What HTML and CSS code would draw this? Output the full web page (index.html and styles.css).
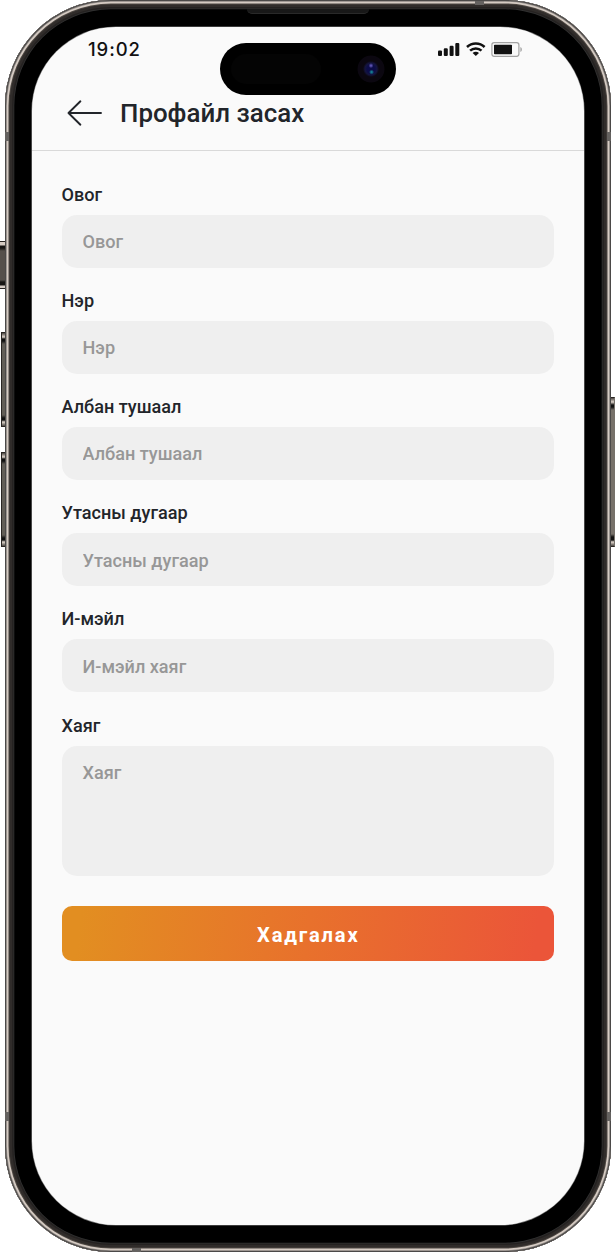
FILE: index.html
```html
<!DOCTYPE html>
<html lang="mn">
<head>
<meta charset="utf-8">
<title>Профайл засах</title>
<link rel="stylesheet" href="styles.css">
</head>
<body>
<div class="device">
  <span class="key key-action"></span>
  <span class="key key-left key-up"></span>
  <span class="key key-left key-down"></span>
  <span class="key key-power"></span>
  <div class="frame">
    <span class="antenna antenna-side antenna-lt"></span>
    <span class="antenna antenna-side antenna-rt"></span>
    <span class="antenna antenna-side antenna-lb"></span>
    <span class="antenna antenna-side antenna-rb"></span>
    <span class="antenna antenna-edge antenna-top"></span>
    <span class="antenna antenna-edge antenna-bottom"></span>
    <span class="speaker"></span>
    <div class="island"><span class="sensor"></span><span class="camera"></span></div>
    <main class="screen">
      <div class="status">
        <span class="time">19:02</span>
        <svg class="indicators" width="86" height="16" viewBox="0 0 86 16">
          <g fill="#111">
            <rect x="0" y="8.5" width="4" height="5.5" rx="1.1"/>
            <rect x="5.8" y="6.3" width="4" height="7.7" rx="1.1"/>
            <rect x="11.6" y="3.8" width="4" height="10.2" rx="1.1"/>
            <rect x="17.3" y="1" width="4" height="13" rx="1.1"/>
            <path d="M37.8 13.9 34.6 11.1a4.6 4.6 0 0 1 6.4 0Z"/>
            <rect x="56" y="2.8" width="18" height="9.4" rx=".8"/>
          </g>
          <g fill="none" stroke="#111" stroke-width="2.5">
            <path d="M29 5a12.6 12.6 0 0 1 17.6 0"/>
            <path d="M32.1 8.7a8.2 8.2 0 0 1 11.4 0"/>
          </g>
          <rect x="53.9" y=".7" width="27" height="13.6" rx="2.2" fill="none" stroke="#a3a3a3" stroke-width="1.2"/>
          <path d="M82.4 5v5c2-.8 2-4.2 0-5Z" fill="#a3a3a3"/>
        </svg>
      </div>
      <header class="header">
        <svg class="back" width="36" height="28" viewBox="0 0 36 28" fill="none" stroke="#22252a" stroke-width="1.9" stroke-linecap="round" stroke-linejoin="round"><path d="M34 14H1.5M13.4 2.3 1.5 14l11.9 11.7"/></svg>
        <h1 class="title">Профайл засах</h1>
      </header>
      <form class="form">
        <label class="field">Овог<input class="input" placeholder="Овог"></label>
        <label class="field">Нэр<input class="input" placeholder="Нэр"></label>
        <label class="field">Албан тушаал<input class="input" placeholder="Албан тушаал"></label>
        <label class="field">Утасны дугаар<input class="input" placeholder="Утасны дугаар"></label>
        <label class="field">И-мэйл<input class="input" placeholder="И-мэйл хаяг"></label>
        <label class="field">Хаяг<textarea class="input area" placeholder="Хаяг"></textarea></label>
        <button class="save" type="button">Хадгалах</button>
      </form>
    </main>
  </div>
</div>
</body>
</html>
```
FILE: styles.css
```css
* { box-sizing: border-box; }
body { margin: 0; background: #fff; font-family: Roboto, "Liberation Sans", sans-serif; }
.device { position: relative; width: 616px; height: 1254px; padding: 0 5px 2px; overflow: hidden; }
.frame {
  position: relative;
  height: 1252px;
  padding: 27px 27px 27px 26.5px;
  border-radius: 106px;
  background: #000;
  box-shadow:
    inset 0 0 0 1px #4b4948,
    inset 0 0 0 1.8px #8d8783,
    inset 0 0 0 3.5px #d5cbc3,
    inset 0 0 0 4.5px #4d4742,
    inset 0 0 0 7px #302c2a,
    inset 0 0 0 8.5px #252221,
    inset 0 0 0 9.3px #303030;
}
.screen {
  height: 1198px;
  border-radius: 84px;
  background: #fafafa;
  box-shadow: 0 0 0 .6px #777;
  overflow: hidden;
}
.key { position: absolute; border: 1px solid #292522; }
.key-action { left: -1px; top: 241px; width: 7px; height: 48px; border-width: 1px 0; background: linear-gradient(#d5cbc3 0 3px, #171513 4px 6px, #55504b 9px 38px, #171513 40px 43px, #d5cbc3 44px); }
.key-left { left: 1px; width: 5px; height: 95px; background: linear-gradient(#4a4541, #ded4cb 4px, #111 6px 8px, #625e57 11px 82px, #111 85px 87px, #ded4cb 89px, #4a4541); }
.key-up { top: 332px; }
.key-down { top: 452px; }
.key-power { left: 610px; top: 397px; width: 5px; height: 150px; border-right-color: #77726b; background: linear-gradient(#4a4541, #ded4cb 4px, #111 7px 9px, #77716a 12px 136px, #111 139px 142px, #ded4cb 144px, #4a4541); }
.antenna { position: absolute; background: #656260; }
.antenna-side { width: 4px; height: 9px; }
.antenna-lt { left: 0; top: 132px; }
.antenna-rt { right: 0; top: 132px; }
.antenna-lb { left: 0; top: 1112px; }
.antenna-rb { right: 0; top: 1112px; }
.antenna-edge { width: 9px; height: 4px; }
.antenna-top { left: 470px; top: 1px; }
.antenna-bottom { left: 127px; bottom: 0; }
.speaker { position: absolute; left: 242px; top: 9px; width: 122px; height: 5px; border-radius: 0 0 5px 5px; background: #181818; border-bottom: 1px solid #292929; }
.island { position: absolute; z-index: 1; left: 215px; top: 43px; width: 176px; height: 52px; padding: 10px 11px; border-radius: 26px; background: #000; display: flex; justify-content: space-between; align-items: center; }
.sensor { width: 90px; height: 30px; border-radius: 15px; background: #040404; }
.camera { width: 28px; height: 28px; border-radius: 50%; background: radial-gradient(circle at 50% 38%, #5a50ad 0 .6px, transparent 2.5px), radial-gradient(circle at 52% 61%, #147c91 0 .6px, transparent 2.5px), radial-gradient(circle, #0c0c48 0 4px, #15153e 6px, #0b0710 8px 13px, #000 14px); }
.status { height: 48px; padding: 11px 60.5px 0 56.5px; display: flex; justify-content: space-between; }
.time { font: 500 18.5px/22px Inter, sans-serif; letter-spacing: .9px; color: #111; }
.indicators { margin-top: 4px; }
.header { height: 76px; padding: 0 35px; display: flex; align-items: center; gap: 17.5px; border-bottom: 1px solid #d9d9d9; }
.title { margin: 0; font-size: 25.9px; line-height: 32px; font-weight: 500; color: #22252a; }
.form { padding: 32.6px 30px; display: flex; flex-direction: column; gap: 22.2px; }
.field { display: flex; flex-direction: column; gap: 9px; font-size: 18.1px; line-height: 22px; font-weight: 500; color: #22252a; }
.input { display: block; width: 100%; height: 53px; border: 0; padding: 1px 21px 0; border-radius: 15px; outline: 0; background: #efefef; font: 500 18.1px/22px Roboto, sans-serif; color: #22252a; resize: none; }
.input::placeholder { color: #979797; opacity: 1; }
.area { height: 130px; padding-top: 16.4px; }
.save { height: 55px; margin-top: 8.6px; padding: 2px 0 0 1px; border: 0; border-radius: 10px; background: linear-gradient(97deg, #e28e21 4%, #e8712c 50%, #eb5539 96%); color: #fff; font: 700 20.2px/24px Roboto, sans-serif; letter-spacing: 1.8px; }
```
